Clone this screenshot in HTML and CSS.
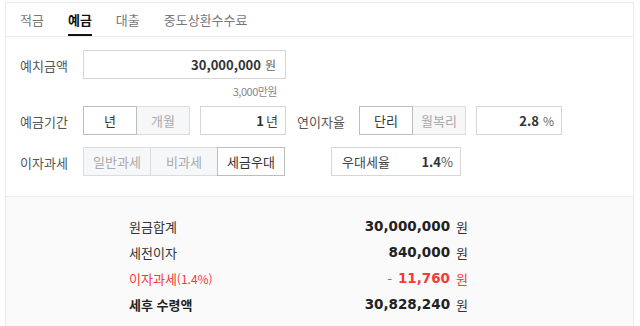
FILE: index.html
```html
<!DOCTYPE html>
<html lang="ko">
<head>
<meta charset="utf-8">
<title>예금 계산기</title>
<link rel="stylesheet" href="styles.css">
</head>
<body>
<div class="calc">
  <ul class="tabs">
    <li class="tab">적금</li>
    <li class="tab on">예금</li>
    <li class="tab">대출</li>
    <li class="tab">중도상환수수료</li>
  </ul>
  <div class="form">
    <div class="row">
      <span class="label">예치금액</span>
      <div class="field wide"><b class="num">30,000,000</b><span class="unit">원</span></div>
    </div>
    <div class="hint">3,000만원</div>
    <div class="row">
      <span class="label">예금기간</span>
      <div class="seg">
        <span class="btn on">년</span>
        <span class="btn">개월</span>
      </div>
      <div class="field small"><b class="num">1</b><span class="unit tight">년</span></div>
      <span class="label label2">연이자율</span>
      <div class="seg">
        <span class="btn on">단리</span>
        <span class="btn">월복리</span>
      </div>
      <div class="field small"><b class="num">2.8</b><span class="unit">%</span></div>
    </div>
    <div class="row row3">
      <span class="label">이자과세</span>
      <div class="seg seg3">
        <span class="btn">일반과세</span>
        <span class="btn">비과세</span>
        <span class="btn on">세금우대</span>
      </div>
      <div class="rate"><span class="rate-label">우대세율</span><b class="num">1.4</b><span class="pct">%</span></div>
    </div>
  </div>
  <div class="result">
    <div class="res-row"><span class="res-label">원금합계</span><span class="res-val"><b>30,000,000</b><span class="won">원</span></span></div>
    <div class="res-row"><span class="res-label">세전이자</span><span class="res-val"><b>840,000</b><span class="won">원</span></span></div>
    <div class="res-row red"><span class="res-label">이자과세<span class="paren">(1.4%)</span></span><span class="res-val"><span class="minus">-</span><b>11,760</b><span class="won">원</span></span></div>
    <div class="res-row total"><span class="res-label">세후 수령액</span><span class="res-val"><b>30,828,240</b><span class="won">원</span></span></div>
  </div>
</div>
</body>
</html>
```
FILE: styles.css
```css
* { box-sizing: border-box; }
html, body { margin: 0; padding: 0; background: #fff; }
body {
  font-family: "Noto Sans CJK KR", "Noto Sans", sans-serif;
  font-size: 13px;
  color: #333;
}
.calc {
  margin: 2px 0 0 5px;
  width: 629px;
  border: 1px solid #ebebeb;
  border-bottom: none;
  background: #fff;
}
.tabs {
  list-style: none;
  margin: 0;
  padding: 0 0 0 14px;
  display: flex;
  gap: 24px;
  height: 34px;
  border-bottom: 1px solid #ececec;
}
.tab {
  height: 33px;
  padding-top: 1px;
  line-height: 31px;
  color: #777;
  font-size: 13px;
  border-bottom: 2px solid transparent;
}
.tab.on {
  color: #111;
  font-weight: 700;
  border-bottom-color: #111;
}
.form {
  padding: 13px 0 20px 14px;
  border-bottom: 1px solid #ececec;
}
.row {
  display: flex;
  align-items: center;
  height: 29px;
}
.row3 { margin-top: 12px; }
.label {
  width: 63px;
  color: #555;
  font-size: 13px;
  flex: none;
  padding-top: 1px;
}
.label2 { margin-left: 11px; width: 62px; }
.field {
  height: 29px;
  border: 1px solid #d6d6d6;
  display: flex;
  align-items: center;
  justify-content: flex-end;
  padding-right: 9px;
  flex: none;
}
.field.wide { width: 203px; }
.field.small { width: 86px; margin-left: 10px; padding-right: 7px; }
.num {
  font-weight: 700;
  color: #333;
  font-size: 13px;
}
.unit {
  margin-left: 4px;
  font-size: 12px;
  color: #666;
}
.unit.tight { margin-left: 2px; font-size: 13px; color: #444; }
.hint {
  width: 266px;
  text-align: right;
  padding-right: 9px;
  margin: 5px 0 8px;
  height: 14px;
  line-height: 14px;
  font-size: 11px;
  color: #888;
  letter-spacing: -0.5px;
}
.seg { display: flex; flex: none; }
.btn {
  width: 54px;
  height: 29px;
  display: flex;
  align-items: center;
  justify-content: center;
  border: 1px solid #dcdcdc;
  background: #f6f7f9;
  color: #aaa;
  font-size: 13px;
  position: relative;
}
.btn + .btn { margin-left: -1px; }
.btn.on {
  background: #fff;
  color: #333;
  border-color: #bdbdbd;
  z-index: 1;
}
.seg3 .btn { width: 68px; }
.rate {
  margin-left: 46px;
  width: 130px;
  height: 29px;
  border: 1px solid #d6d6d6;
  display: flex;
  align-items: center;
  padding: 0 7px 0 10px;
}
.rate-label { flex: 1; color: #444; font-size: 13px; }
.pct { font-size: 13px; color: #555; }
.result {
  background: #fafafa;
  padding: 16px 0 0 123px;
  height: 129px;
  overflow: hidden;
}
.res-row {
  width: 339px;
  height: 26px;
  display: flex;
  align-items: center;
  justify-content: space-between;
}
.res-label { font-size: 13px; color: #333; }
.paren { font-size: 12px; }
.res-val { display: flex; align-items: center; }
.res-val b {
  font-family: "DejaVu Sans", "Verdana", sans-serif;
  font-weight: 700;
  font-size: 13.5px;
  color: #222;
}
.won { margin-left: 6px; font-size: 13px; color: #333; }
.red .res-label, .red .won, .red .res-val b, .red .minus { color: #f43a3a; }
.minus { margin-right: 6px; font-size: 13px; }
.total .res-label { font-weight: 700; color: #222; }
```
